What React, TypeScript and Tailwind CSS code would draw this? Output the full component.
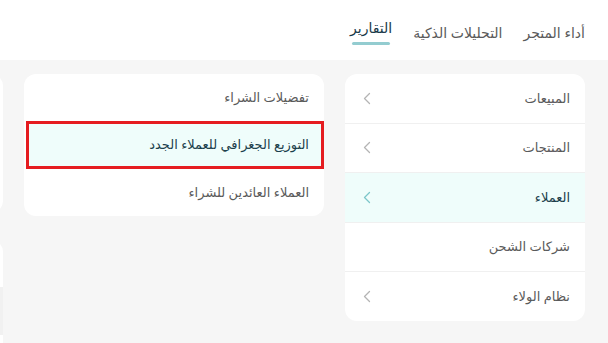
import React from 'react'

const Chevron = ({active}: {active?: boolean}) => (
	<svg width='8' height='13' viewBox='0 0 8 13' fill='none' className={active ? 'text-[#7cc6c9]' : 'text-[#b4b4b4]'}>
		<path d='M6.5 1.5L1.5 6.5L6.5 11.5' stroke='currentColor' strokeWidth='1.3' strokeLinecap='round' strokeLinejoin='round' />
	</svg>
)

const sections = [
	{label: 'المبيعات', chevron: true},
	{label: 'المنتجات', chevron: true},
	{label: 'العملاء', chevron: true, active: true},
	{label: 'شركات الشحن', chevron: false},
	{label: 'نظام الولاء', chevron: true},
]

const reports = [
	{label: 'تفضيلات الشراء'},
	{label: 'التوزيع الجغرافي للعملاء الجدد', selected: true},
	{label: 'العملاء العائدين للشراء'},
]

export default function App() {
	return (
		<div
			dir='rtl'
			className='w-[608px] h-[343px] overflow-hidden bg-[#f6f6f6] flex flex-col'
			style={{fontFamily: '"Noto Sans", "DejaVu Sans", sans-serif'}}
		>
			{/* Tabs */}
			<div className='h-[60px] shrink-0 bg-white flex items-end pr-[23px] gap-[21px] text-[14px]'>
				<div className='pb-[17px] text-[#5a5a5a]'>أداء المتجر</div>
				<div className='pb-[17px] text-[#5a5a5a]'>التحليلات الذكية</div>
				<div className='flex flex-col items-center'>
					<div className='text-[#173848]'>التقارير</div>
					<div className='w-[38px] h-[3px] rounded-full bg-[#93ccd0] mt-[4px] mb-[15px]' />
				</div>
			</div>

			{/* Content */}
			<div className='flex items-start gap-[21px] pt-[14px] pr-[23px]'>
				<div className='w-[240px] h-[247px] shrink-0 bg-white rounded-[12px] overflow-hidden flex flex-col'>
					{sections.map((s, i) => (
						<div
							key={s.label}
							className={`flex-1 flex items-center justify-between pr-[15px] pl-[18px] text-[13px] ${
								i < sections.length - 1 ? 'border-b border-[#f0f0f0]' : ''
							} ${s.active ? 'bg-[#effdfb] text-[#1b3f4c]' : 'text-[#5a5a5a]'}`}
						>
							<span>{s.label}</span>
							{s.chevron && <Chevron active={s.active} />}
						</div>
					))}
				</div>

				<div className='w-[300px] h-[142px] shrink-0 bg-white rounded-[12px] flex flex-col'>
					{reports.map((r) =>
						r.selected ? (
							<div
								key={r.label}
								className='h-[48px] ml-[2px] flex items-center pr-[12px] border-[3px] border-[#e51c20] bg-[#effdfb] text-[13px] text-[#1b3f4c]'
							>
								{r.label}
							</div>
						) : (
							<div key={r.label} className='h-[47px] flex items-center pr-[15px] text-[13px] text-[#5a5a5a]'>
								{r.label}
							</div>
						)
					)}
				</div>

				<div className='w-[120px] shrink-0 flex flex-col gap-[27px]'>
					<div className='h-[139px] bg-white rounded-[12px]' />
					<div className='h-[120px] bg-white rounded-[12px] pt-[47px]'>
						<div className='h-[48px] bg-[#f1f1f1]' />
					</div>
				</div>
			</div>
		</div>
	)
}
